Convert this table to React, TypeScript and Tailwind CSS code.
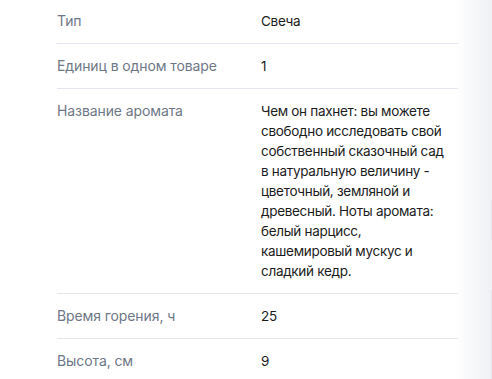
import React from "react";

type Row = { label: string; value: string };

const rows: Row[] = [
  { label: "Тип", value: "Свеча" },
  { label: "Единиц в одном товаре", value: "1" },
  {
    label: "Название аромата",
    value:
      "Чем он пахнет: вы можете свободно исследовать свой собственный сказочный сад в натуральную величину - цветочный, земляной и древесный. Ноты аромата: белый нарцисс, кашемировый мускус и сладкий кедр.",
  },
  { label: "Время горения, ч", value: "25" },
  { label: "Высота, см", value: "9" },
];

export default function App() {
  return (
    <div className="relative h-[379px] w-[492px] overflow-hidden bg-white font-['Inter',sans-serif] text-[14px] leading-[20px]">
      <div className="ml-[57px] mt-[-1px] w-[401px]">
        {rows.map((row, i) => (
          <div
            key={i}
            className={`flex py-3 ${i > 0 ? "border-t border-[#e3e6ee]" : ""}`}
          >
            <div className="w-[204px] shrink-0 tracking-[-0.1px] text-[#6e7787]">{row.label}</div>
            <div className="w-[187px] text-[13.5px] tracking-[-0.3px] text-[#1c1c1c]">{row.value}</div>
          </div>
        ))}
      </div>
      <div className="pointer-events-none absolute right-0 top-0 h-full w-[36px] bg-gradient-to-r from-white/0 to-[#eef0f4]" />
      <div className="pointer-events-none absolute right-0 top-[200px] h-[40px] w-px bg-[#e6e8ee]" />
      <div className="pointer-events-none absolute right-0 top-[290px] h-[89px] w-px bg-[#e6e8ee]" />
    </div>
  );
}
